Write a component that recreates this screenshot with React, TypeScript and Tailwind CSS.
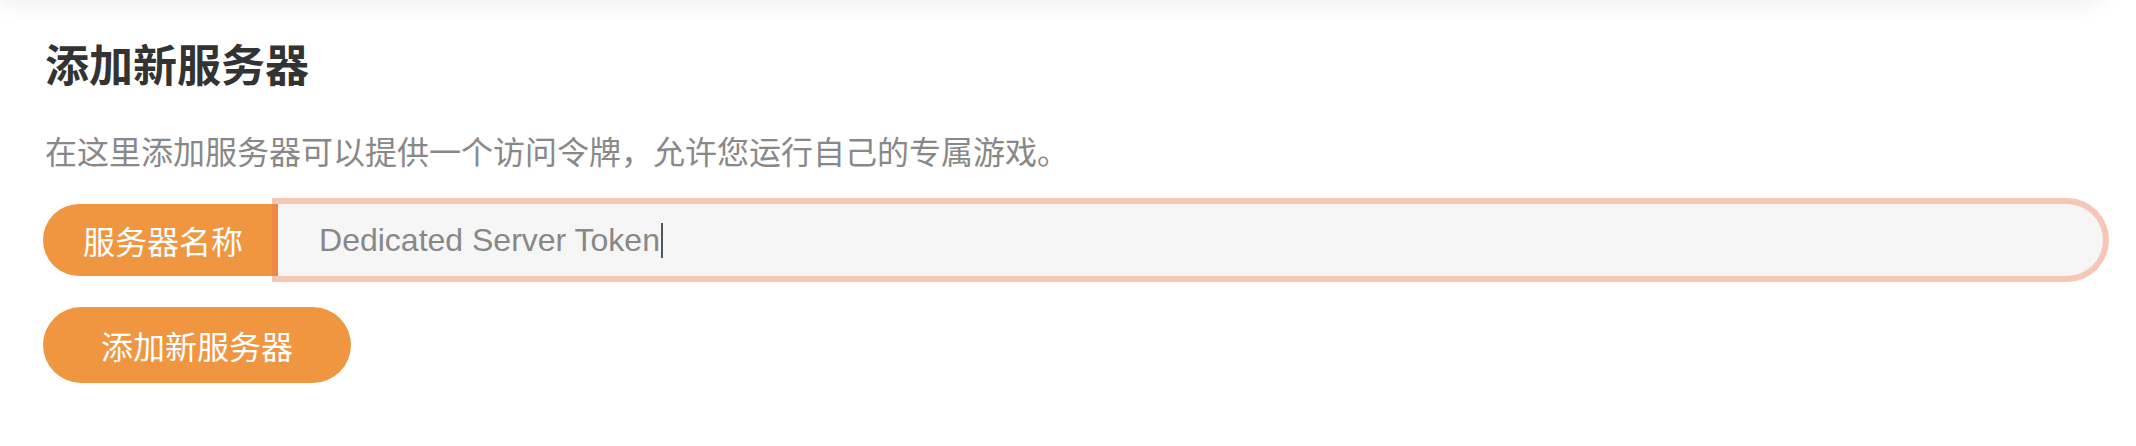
import React from "react";

const cjk = '"Noto Sans CJK SC", "Noto Sans", sans-serif';
const latin = '"Liberation Sans", Arial, "Noto Sans CJK SC", sans-serif';

export default function App() {
  return (
    <div className="w-[2136px] h-[446px] bg-white overflow-hidden">
      <div className="-mt-[60px] h-[60px] w-[2100px] bg-white shadow-[0_0_26px_rgba(0,0,0,0.09)]" />
      <div className="pl-[43px] pr-[33px] pt-[33px]" style={{ fontFamily: cjk }}>
        <h1 className="text-[44px] leading-[60px] font-bold text-[#333333] pl-[2px]">添加新服务器</h1>
        <p className="mt-[33px] text-[32px] leading-[48px] text-[#888888] pl-[2px]">
          在这里添加服务器可以提供一个访问令牌，允许您运行自己的专属游戏。
        </p>
        <div className="mt-[30px] flex items-stretch h-[72px]">
          <div className="flex items-center rounded-l-full bg-[#f09640] pl-[40px] pr-[35px] text-[32px] text-white whitespace-nowrap">
            服务器名称
          </div>
          <div
            className="flex-1 flex items-center rounded-r-full bg-[#f6f6f6] pl-[41px] shadow-[0_0_0_6px_rgba(232,112,72,0.4)] text-[32px] text-[#888888]"
            style={{ fontFamily: latin }}
          >
            <span>Dedicated Server Token</span>
            <span className="ml-[1px] inline-block w-[2px] h-[35px] bg-[#555555]" />
          </div>
        </div>
        <button className="mt-[31px] flex items-center h-[76px] rounded-full bg-[#f09640] px-[58px] text-[32px] text-white">
          添加新服务器
        </button>
      </div>
    </div>
  );
}
